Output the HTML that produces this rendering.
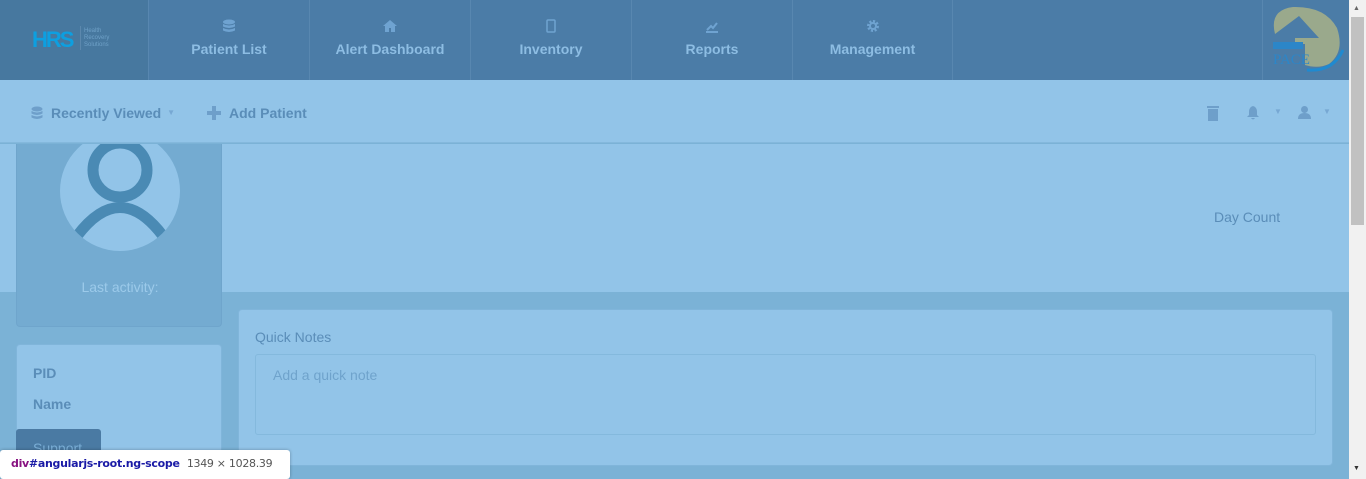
<!DOCTYPE html>
<html><head><meta charset="utf-8"><style>
*{margin:0;padding:0;box-sizing:border-box}
html,body{width:1366px;height:479px;overflow:hidden}
body{font-family:"Liberation Sans",sans-serif;background:#7bb2d6;position:relative}
.top{position:absolute;left:0;top:0;width:1349px;height:80px;background:#4b7ca7}
.logo{position:absolute;left:0;top:0;width:148px;height:80px;background:#47789f}
.nav{position:absolute;top:0;height:80px;border-left:1px solid #5887b0;text-align:center;color:#8dbde3;font-weight:bold;font-size:14px}
.nav .ic{display:block;margin:19px auto 8px;height:14px}
.sub{position:absolute;left:0;top:80px;width:1349px;height:63px;background:#92c4e8;border-bottom:1px solid #84b8dc}
.sub span{position:absolute;top:25px;color:#5a8db8;font-weight:bold;font-size:14px}
.band{position:absolute;left:0;top:144px;width:1349px;height:148px;background:#92c4e8}
.card{position:absolute;left:16px;top:144px;width:206px;height:183px;background:#74abd1;border-radius:0 0 4px 4px;border:1px solid #6fa5cc;border-top:none}
.pid{position:absolute;left:16px;top:344px;width:206px;height:140px;background:#92c4e8;border:1px solid #80b5da;border-radius:4px}
.qn{position:absolute;left:238px;top:309px;width:1095px;height:157px;background:#92c4e8;border:1px solid #80b5da;border-radius:4px}
.ta{position:absolute;left:16px;top:44px;width:1061px;height:81px;border:1px solid #84b9dd;border-radius:3px}
.sb{position:absolute;left:1349px;top:0;width:17px;height:479px;background:#f1f1f1}
</style></head><body>
<div class="top">
 <div class="logo">
  <div style="position:absolute;left:32px;top:27px;color:#0d9fe0;font-weight:900;font-size:22px;letter-spacing:-2px">HRS</div>
  <div style="position:absolute;left:80px;top:26px;width:1px;height:24px;background:#5c88ad"></div>
  <div style="position:absolute;left:84px;top:28px;color:#6ea0c7;font-size:6px;line-height:7px">Health<br>Recovery<br>Solutions</div>
 </div>
 <div class="nav" style="left:148px;width:161px"><svg class="ic" width="14" height="14" viewBox="0 0 14 14"><g fill="#6fa3d1"><ellipse cx="7" cy="3" rx="6" ry="2.5"/><path d="M1 5q6 3 12 0v2.5q-6 3-12 0z"/><path d="M1 9q6 3 12 0v2.5q-6 3-12 0z"/></g></svg>Patient List</div>
 <div class="nav" style="left:309px;width:161px"><svg class="ic" width="14" height="14" viewBox="0 0 14 14"><path d="M7 1L0 7h2v6h4v-4h2v4h4V7h2z" fill="#6fa3d1"/></svg>Alert Dashboard</div>
 <div class="nav" style="left:470px;width:161px"><svg class="ic" width="14" height="14" viewBox="0 0 14 14"><rect x="3" y="1" width="8" height="12" rx="1" fill="none" stroke="#6fa3d1" stroke-width="1.5"/></svg>Inventory</div>
 <div class="nav" style="left:631px;width:161px"><svg class="ic" width="14" height="14" viewBox="0 0 14 14"><path d="M1 13h12M2 11l4-4 2 2 4-5" stroke="#6fa3d1" stroke-width="2" fill="none"/></svg>Reports</div>
 <div class="nav" style="left:792px;width:161px;border-right:1px solid #5887b0"><svg class="ic" width="14" height="14" viewBox="0 0 14 14"><circle cx="7" cy="7" r="4.5" fill="none" stroke="#6fa3d1" stroke-width="3" stroke-dasharray="2 1.5"/><circle cx="7" cy="7" r="3" fill="none" stroke="#6fa3d1" stroke-width="2"/></svg>Management</div>
 <div style="position:absolute;left:1262px;top:0;width:87px;height:80px;border-left:1px solid #5887b0">
  <svg width="87" height="80" viewBox="0 0 87 80"><path d="M12 34Q6 10 30 7Q62 6 74 28Q82 52 66 64Q55 69 42 65V44H32V38H56L36 16Z" fill="#9aa98c"/><path d="M44 70Q70 72 80 50" stroke="#1f8ad0" stroke-width="3" fill="none"/><rect x="10" y="42" width="30" height="7" fill="#2c86c8"/><text x="10" y="64" font-size="15" fill="#2c86c8" font-family="Liberation Serif">PACE</text></svg>
 </div>
</div>
<div class="sub">
 <svg style="position:absolute;left:31px;top:26px" width="12" height="14" viewBox="0 0 12 14"><g fill="#6e9fca"><ellipse cx="6" cy="3" rx="5.5" ry="2.5"/><path d="M.5 5q5.5 3 11 0v2.5q-5.5 3-11 0z"/><path d="M.5 9q5.5 3 11 0v2.5q-5.5 3-11 0z"/></g></svg>
 <span style="left:51px">Recently Viewed <span style="position:relative;top:-3px;left:2px;font-size:8px;color:#77a8d3">▼</span></span>
 <svg style="position:absolute;left:206px;top:25px" width="16" height="16" viewBox="0 0 16 16"><path d="M6 1h4v5h5v4h-5v5H6v-5H1V6h5z" fill="#6e9fca"/></svg>
 <span style="left:229px">Add Patient</span>
 <svg style="position:absolute;left:1207px;top:26px" width="12" height="15"><rect x="0" y="0" width="12" height="2" fill="#6e9fca"/><rect x="1" y="3" width="10" height="12" fill="#6e9fca"/></svg>
 <svg style="position:absolute;left:1246px;top:26px" width="14" height="14" viewBox="0 0 14 14"><path d="M7 0q4 1 4 6v3l2 2H1l2-2V6q0-5 4-6zM5 12h4q-2 3-4 0z" fill="#6e9fca"/></svg>
 <span style="left:1274px;top:27px;font-size:8px;color:#77a8d3">▼</span>
 <svg style="position:absolute;left:1298px;top:26px" width="13" height="13" viewBox="0 0 13 13"><circle cx="6.5" cy="3.5" r="3.5" fill="#6e9fca"/><path d="M0 13q0-6 6.5-6t6.5 6z" fill="#6e9fca"/></svg>
 <span style="left:1323px;top:27px;font-size:8px;color:#77a8d3">▼</span>
</div>
<div class="band"><div style="position:absolute;left:1214px;top:65px;color:#5a8db8;font-size:14px">Day Count</div></div>
<div class="card">
 <svg style="position:absolute;left:42px;top:0" width="122" height="110" viewBox="0 0 122 110"><defs><clipPath id="c"><circle cx="61" cy="47" r="60"/></clipPath></defs><circle cx="61" cy="47" r="60" fill="#92c4e8"/><g clip-path="url(#c)" fill="none" stroke="#4a8ab4" stroke-width="11"><circle cx="61" cy="26" r="27"/><path d="M18 92Q61 35 104 92"/></g></svg>
 <div style="position:absolute;left:0;width:206px;top:135px;text-align:center;color:#9ccaea;font-size:14px">Last activity:</div>
</div>
<div class="pid">
 <div style="position:absolute;left:16px;top:20px;color:#5a8db8;font-weight:bold;font-size:14px">PID</div>
 <div style="position:absolute;left:16px;top:51px;color:#5a8db8;font-weight:bold;font-size:14px">Name</div>
</div>
<div style="position:absolute;left:16px;top:429px;width:85px;height:40px;background:#4a7aa3;border-radius:3px;color:#7aaed6;font-size:14px;padding:11px 17px">Support</div>
<div class="qn">
 <div style="position:absolute;left:16px;top:19px;color:#5a8db8;font-size:14px">Quick Notes</div>
 <div class="ta"><div style="position:absolute;left:17px;top:12px;color:#6fa3cc;font-size:14px">Add a quick note</div></div>
</div>
<div style="position:absolute;left:0;top:450px;width:290px;height:29px;background:#fff;border-radius:3px;box-shadow:0 0 3px rgba(0,0,0,.3);font-size:11px;padding:7px 11px;white-space:nowrap;font-family:'DejaVu Sans',sans-serif;letter-spacing:-0.3px"><b style="color:#881280">div</b><b style="color:#1a1aa6">#angularjs-root.ng-scope</b> <span style="color:#555;margin-left:4px">1349 × 1028.39</span></div>
<div class="sb"><div style="position:absolute;left:2px;top:17px;width:13px;height:208px;background:#c1c1c1"></div><div style="position:absolute;left:4px;top:5px;font-size:7px;color:#666">▲</div><div style="position:absolute;left:4px;top:465px;font-size:7px;color:#333">▼</div></div>
</body></html>
